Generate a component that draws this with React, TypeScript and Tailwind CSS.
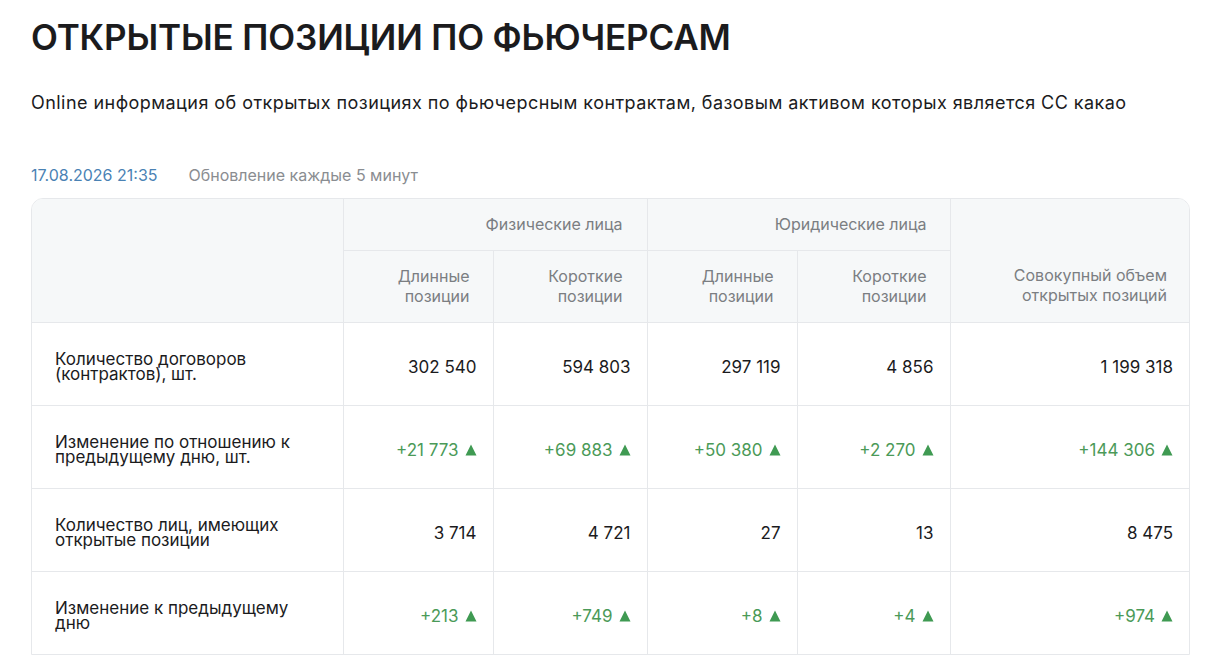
import React from "react";

const Up = () => (
  <svg width="12" height="12" viewBox="0 0 12 12" className="inline-block ml-[6px] mb-[2px]">
    <path d="M6 0.5 L11.5 11.5 L0.5 11.5 Z" fill="#3f9a52" />
  </svg>
);

const rows: { label: string[]; vals: string[]; green: boolean }[] = [
  { label: ["Количество договоров", "(контрактов), шт."], vals: ["302 540", "594 803", "297 119", "4 856", "1 199 318"], green: false },
  { label: ["Изменение по отношению к", "предыдущему дню, шт."], vals: ["+21 773", "+69 883", "+50 380", "+2 270", "+144 306"], green: true },
  { label: ["Количество лиц, имеющих", "открытые позиции"], vals: ["3 714", "4 721", "27", "13", "8 475"], green: false },
  { label: ["Изменение к предыдущему", "дню"], vals: ["+213", "+749", "+8", "+4", "+974"], green: true },
];

export default function App() {
  return (
    <div className="bg-white min-h-[669px] pl-[31px] pr-[31px] pt-[17px]" style={{ fontFamily: "Inter, 'Noto Sans', sans-serif" }}>
      <h1 className="text-[35px] leading-[40px] font-semibold text-[#1b1b1d] tracking-[-0.15px]">ОТКРЫТЫЕ ПОЗИЦИИ ПО ФЬЮЧЕРСАМ</h1>
      <p className="mt-[34px] text-[18px] leading-[24px] text-[#1b1b1d] tracking-[0.45px] whitespace-nowrap">
        Online информация об открытых позициях по фьючерсным контрактам, базовым активом которых является CC какао
      </p>
      <div className="mt-[50px] flex items-center text-[16px] leading-[20px]">
        <span className="text-[#4a82b4]">17.08.2026 21:35</span>
        <span className="ml-[31px] text-[#8a8d91]">Обновление каждые 5 минут</span>
      </div>
      <div className="mt-[13px] w-[1159px] border border-[#e6e8eb] rounded-t-[12px] overflow-hidden">
        <table className="table-fixed border-collapse w-full">
          <colgroup>
            <col className="w-[311px]" />
            <col className="w-[150px]" />
            <col className="w-[154px]" />
            <col className="w-[150px]" />
            <col className="w-[153px]" />
            <col className="w-[239px]" />
          </colgroup>
          <thead className="bg-[#f6f8f9] text-[#7b7e82] text-[16px] leading-[20px] font-normal">
            <tr className="h-[51px]">
              <th rowSpan={2} className="border-r border-b border-[#e6e8eb]"></th>
              <th colSpan={2} className="border-r border-b border-[#e6e8eb] text-right pr-[24px] font-normal">Физические лица</th>
              <th colSpan={2} className="border-r border-b border-[#e6e8eb] text-right pr-[23px] font-normal">Юридические лица</th>
              <th rowSpan={2} className="border-b border-[#e6e8eb] text-right pr-[22px] pt-[50px] font-normal">
                Совокупный объем<br />открытых позиций
              </th>
            </tr>
            <tr className="h-[72px]">
              <th className="border-r border-b border-[#e6e8eb] text-right pr-[23px] font-normal">Длинные<br />позиции</th>
              <th className="border-r border-b border-[#e6e8eb] text-right pr-[24px] font-normal">Короткие<br />позиции</th>
              <th className="border-r border-b border-[#e6e8eb] text-right pr-[23px] font-normal">Длинные<br />позиции</th>
              <th className="border-r border-b border-[#e6e8eb] text-right pr-[23px] font-normal">Короткие<br />позиции</th>
            </tr>
          </thead>
          <tbody>
            {rows.map((r, i) => (
              <tr key={i} className="h-[83px]">
                <td className={`pl-[23px] pt-[6px] text-[17px] leading-[15px] text-[#1b1b1d] border-r border-[#e6e8eb] ${i < rows.length - 1 ? "border-b" : ""}`}>
                  {r.label[0]}<br />{r.label[1]}
                </td>
                {r.vals.map((v, j) => (
                  <td
                    key={j}
                    className={`text-right pr-[16px] pt-[6px] text-[17px] leading-[22px] border-[#e6e8eb] ${j < 4 ? "border-r" : ""} ${i < rows.length - 1 ? "border-b" : ""} ${r.green ? "text-[#4b9a58]" : "text-[#1b1b1d]"}`}
                  >
                    {v}
                    {r.green && <Up />}
                  </td>
                ))}
              </tr>
            ))}
          </tbody>
        </table>
      </div>
    </div>
  );
}
